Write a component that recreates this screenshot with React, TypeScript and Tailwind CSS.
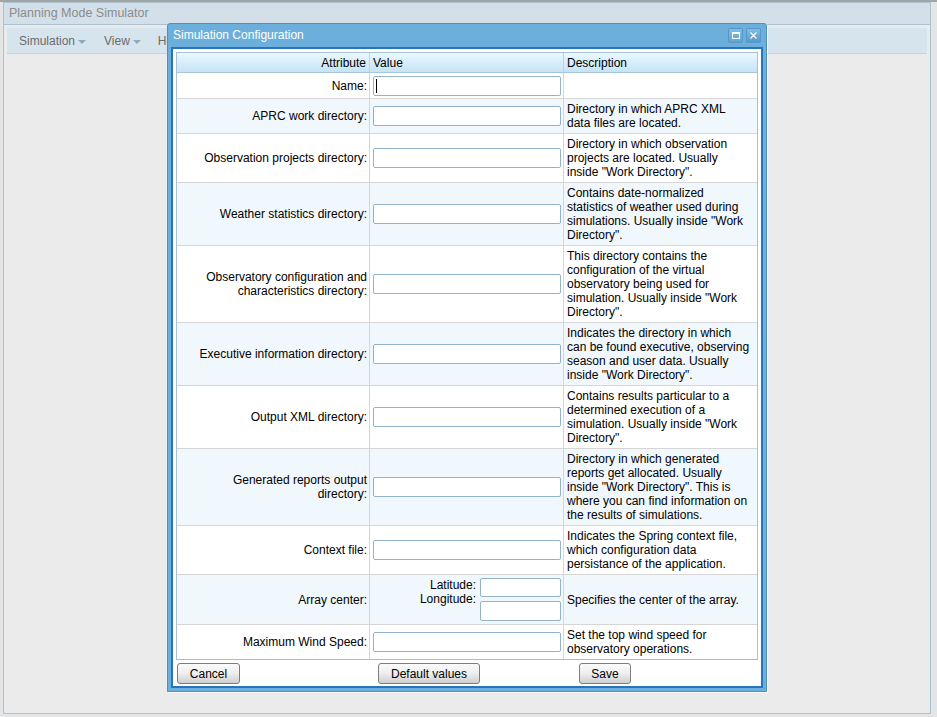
import React from "react";

const rows: {
  label: React.ReactNode;
  desc: React.ReactNode;
  h: string;
  alt: boolean;
  kind?: "name" | "array";
}[] = [
  { label: "Name:", desc: "", h: "h-[26px]", alt: false, kind: "name" },
  { label: "APRC work directory:", desc: <>Directory in which APRC XML<br />data files are located.</>, h: "h-[35px]", alt: true },
  { label: "Observation projects directory:", desc: <>Directory in which observation<br />projects are located. Usually<br />inside "Work Directory".</>, h: "h-[49px]", alt: false },
  { label: "Weather statistics directory:", desc: <>Contains date-normalized<br />statistics of weather used during<br />simulations. Usually inside "Work<br />Directory".</>, h: "h-[63px]", alt: true },
  { label: <>Observatory configuration and<br />characteristics directory:</>, desc: <>This directory contains the<br />configuration of the virtual<br />observatory being used for<br />simulation. Usually inside "Work<br />Directory".</>, h: "h-[77px]", alt: false },
  { label: "Executive information directory:", desc: <>Indicates the directory in which<br />can be found executive, observing<br />season and user data. Usually<br />inside "Work Directory".</>, h: "h-[63px]", alt: true },
  { label: "Output XML directory:", desc: <>Contains results particular to a<br />determined execution of a<br />simulation. Usually inside "Work<br />Directory".</>, h: "h-[63px]", alt: false },
  { label: <>Generated reports output<br />directory:</>, desc: <>Directory in which generated<br />reports get allocated. Usually<br />inside "Work Directory". This is<br />where you can find information on<br />the results of simulations.</>, h: "h-[77px]", alt: true },
  { label: "Context file:", desc: <>Indicates the Spring context file,<br />which configuration data<br />persistance of the application.</>, h: "h-[49px]", alt: false },
  { label: "Array center:", desc: "Specifies the center of the array.", h: "h-[50px]", alt: true, kind: "array" },
  { label: "Maximum Wind Speed:", desc: <>Set the top wind speed for<br />observatory operations.</>, h: "h-[34px]", alt: false },
];

function Field({ w, h, cursor }: { w: string; h: string; cursor?: boolean }) {
  return (
    <div className={`${w} ${h} rounded-[2px] border border-[#93b3cc] bg-white flex items-center`}>
      {cursor && <div className="ml-[2px] w-[1px] h-[14px] bg-black" />}
    </div>
  );
}

function Btn({ children, w }: { children: React.ReactNode; w: string }) {
  return (
    <div className={`${w} h-[21px] rounded-[3px] border border-[#7d7d7d] bg-gradient-to-b from-[#fbfbfb] via-[#eeeeee] to-[#cfcfcf] flex items-center justify-center text-[12px] text-black`}>
      {children}
    </div>
  );
}

export default function App() {
  return (
    <div className="relative w-[937px] h-[717px] overflow-hidden bg-[#e4e5e6] font-['Liberation_Sans',Arial,sans-serif] text-[12px] text-[#1a1a1a]">
      <div className="h-[2px] bg-[#a4a4a4]" />
      {/* App window */}
      <div className="ml-[3px] w-[928px] h-[712px] border border-[#a9c3d2] bg-[#ebebeb] flex flex-col">
        <div className="h-[22px] bg-[#d3e0ea] border-b border-[#aac3d2] flex items-center pl-[5px] text-[12.5px] text-[#8b8b8b]">
          Planning Mode Simulator
        </div>
        <div className="mt-[3px] mx-[3px] h-[26px] bg-[#d6e4ee] border-b border-[#c2d5e1] flex items-center text-[12px] text-[#6c6c6c]">
          <div className="ml-[12px] flex items-center">
            Simulation
            <span className="ml-[3px] mt-[2px] w-0 h-0 border-l-[4px] border-r-[4px] border-t-[4px] border-l-transparent border-r-transparent border-t-[#8fa9bc]" />
          </div>
          <div className="ml-[18px] flex items-center">
            View
            <span className="ml-[3px] mt-[2px] w-0 h-0 border-l-[4px] border-r-[4px] border-t-[4px] border-l-transparent border-r-transparent border-t-[#8fa9bc]" />
          </div>
          <div className="ml-[17px] flex items-center">Help</div>
        </div>
      </div>

      {/* Dialog */}
      <div className="absolute left-[167px] top-[23px] w-[600px] h-[669px] rounded-t-[3px] border border-[#4b91c8] bg-[#6cafdc] flex flex-col shadow-[1px_1px_0_#ffffff]">
        <div className="h-[23px] flex items-center pl-[5px] pr-[5px] text-white text-[12px]">
          <span className="flex-1 pb-[2px]">Simulation Configuration</span>
          <div className="flex gap-[3px]">
            <div className="w-[15px] h-[15px] rounded-[2px] border border-[#5897c6] bg-gradient-to-b from-[#82bde5] to-[#5ea5d6] flex items-center justify-center">
              <div className="w-[8px] h-[7px] border border-white border-t-[2px]" />
            </div>
            <div className="w-[15px] h-[15px] rounded-[2px] border border-[#5897c6] bg-gradient-to-b from-[#82bde5] to-[#4f9ad0] flex items-center justify-center">
              <svg width="7" height="7" viewBox="0 0 7 7">
                <path d="M0.5 0.5 L6.5 6.5 M6.5 0.5 L0.5 6.5" stroke="white" strokeWidth="1.2" />
              </svg>
            </div>
          </div>
        </div>
        <div className="mx-[3px] mb-[3px] flex-1 border-2 border-[#2874bb] bg-white px-[3px] pt-[3px] flex flex-col">
          <div className="border border-[#a8c1d5] border-b-[#b8b8b8] flex flex-col">
            {/* header */}
            <div className="h-[20px] flex bg-gradient-to-b from-[#eaf8fe] to-[#c5e4f6] border-b border-[#a7c6dc] text-black">
              <div className="w-[193px] border-r border-[#bcd3e3] flex items-center justify-end pr-[3px]">Attribute</div>
              <div className="w-[194px] border-r border-[#bcd3e3] flex items-center pl-[3px]">Value</div>
              <div className="flex-1 flex items-center pl-[3px]">Description</div>
            </div>
            {rows.map((r, i) => (
              <div
                key={i}
                className={`${r.h} flex ${r.alt ? "bg-[#f0f7fd]" : "bg-white"} ${i < rows.length - 1 ? "border-b border-[#d6d6d6]" : ""} text-black`}
              >
                <div className="w-[193px] border-r border-[#d6d6d6] flex items-center justify-end text-right pr-[2px] leading-[14px]">
                  {r.label}
                </div>
                <div className="w-[194px] border-r border-[#d6d6d6] flex items-center pl-[3px]">
                  {r.kind === "array" ? (
                    <div className="flex w-full">
                      <div className="w-[107px] flex flex-col items-end pr-[4px] leading-[14px]">
                        <span>Latitude:</span>
                        <span>Longitude:</span>
                      </div>
                      <div className="flex flex-col gap-[4px]">
                        <Field w="w-[81px]" h="h-[19px]" />
                        <Field w="w-[81px]" h="h-[20px]" />
                      </div>
                    </div>
                  ) : (
                    <Field w="w-[188px]" h="h-[20px]" cursor={r.kind === "name"} />
                  )}
                </div>
                <div className="flex-1 flex items-center pl-[3px] leading-[14px]">{r.desc}</div>
              </div>
            ))}
          </div>
          <div className="mt-[3px] flex">
            <div className="ml-[1px]"><Btn w="w-[63px]">Cancel</Btn></div>
            <div className="ml-[138px]"><Btn w="w-[102px]">Default values</Btn></div>
            <div className="ml-[99px]"><Btn w="w-[52px]">Save</Btn></div>
          </div>
        </div>
      </div>
    </div>
  );
}
